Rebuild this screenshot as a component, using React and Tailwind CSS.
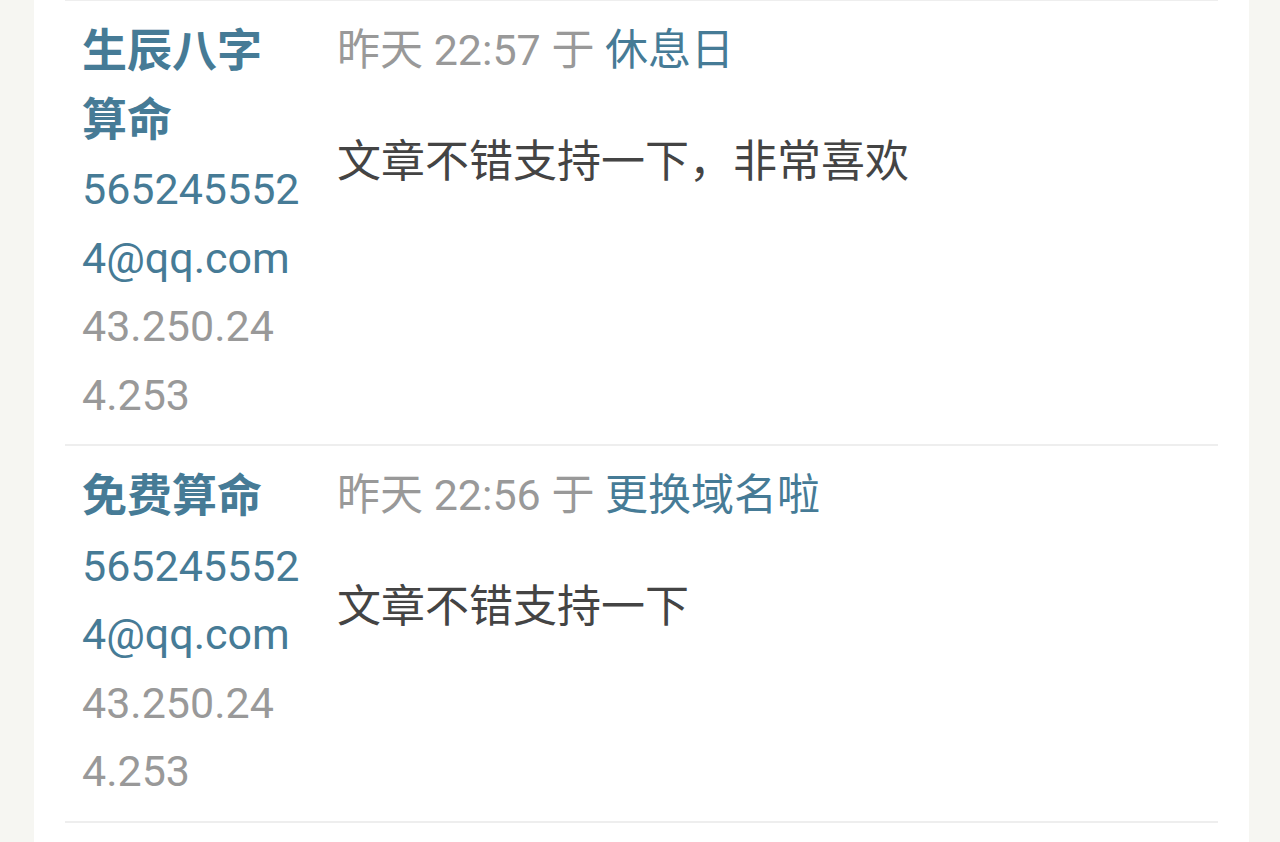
import React from 'react';

// Comment list rows, lines kept as they wrap in the narrow author column
const comments = [
  {
    name: ['生辰八字', '算命'],
    mail: ['565245552', '4@qq.com'],
    ip: ['43.250.24', '4.253'],
    date: '昨天 22:57',
    post: '休息日',
    text: '文章不错支持一下，非常喜欢',
  },
  {
    name: ['免费算命'],
    mail: ['565245552', '4@qq.com'],
    ip: ['43.250.24', '4.253'],
    date: '昨天 22:56',
    post: '更换域名啦',
    text: '文章不错支持一下',
  },
];

const CommentRow = ({ c }) => (
  <div className="flex pl-[17px] pt-[17px] pb-[15px] border-b-2 border-[#eeeeee]">
    {/* author column */}
    <div className="w-[255px] shrink-0 flex flex-col">
      {c.name.map((l) => (
        <span key={l} className="font-bold text-[45px] text-[#467b96]">{l}</span>
      ))}
      {c.mail.map((l) => (
        <span key={l} className="text-[43px] text-[#467b96]">{l}</span>
      ))}
      {c.ip.map((l) => (
        <span key={l} className="text-[43px] text-[#999999]">{l}</span>
      ))}
    </div>

    {/* meta + content */}
    <div className="flex-1 -mt-[2px]">
      <div className="text-[43px] text-[#999999] whitespace-pre">
        {c.date} 于 <span className="text-[#467b96]">{c.post}</span>
      </div>
      <p className="mt-[43px] text-[#444444]">{c.text}</p>
    </div>
  </div>
);

export default function App() {
  return (
    <div
      className="min-h-screen bg-[#f6f6f2] pl-[34px] pr-[31px] text-[44px] leading-[68.5px]"
      style={{ fontFamily: 'Roboto, "Noto Sans CJK SC", sans-serif' }}
    >
      <div className="min-h-screen bg-white px-[31px] overflow-hidden">
        <div className="-mt-[1px] border-b-2 border-[#eeeeee]" />
        {comments.map((c) => (
          <CommentRow key={c.date} c={c} />
        ))}
      </div>
    </div>
  );
}
